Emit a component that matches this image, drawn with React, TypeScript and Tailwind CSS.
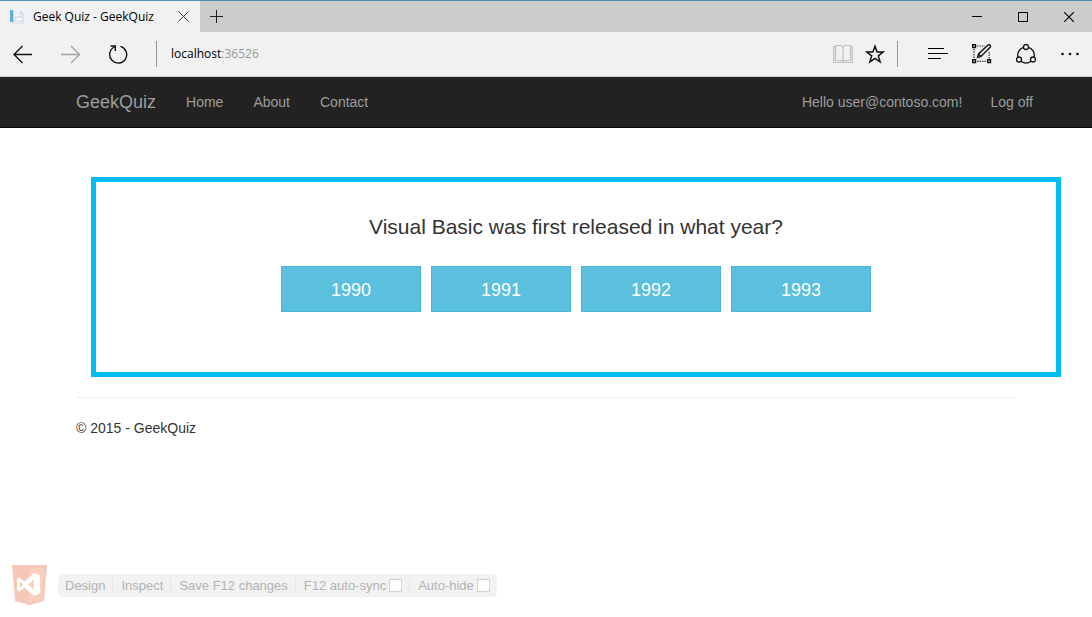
import type { ReactNode } from "react";

const answers = ["1990", "1991", "1992", "1993"];

function IconButton({ label, children, className = "w-5" }: { label: string; children: ReactNode; className?: string }) {
  return (
    <button type="button" aria-label={label} className={`${className} shrink-0`}>
      {children}
    </button>
  );
}

function TabStrip() {
  return (
    <div className="flex h-8 items-stretch border-t border-[#4a90a8] bg-[#cccccc]">
      <div className="flex w-[200px] items-center bg-[#f1f1f1] pr-[11px] pl-[9px] text-black">
        <svg className="h-4 w-4 shrink-0" viewBox="0 0 16 16" aria-hidden="true">
          <path d="M3 1h8l4 4v10H3z" fill="#dfe6eb" />
          <path d="M5 1h6v13H5z" fill="#eef2f4" />
          <path d="M11 1v4h4z" fill="#cbdde6" />
          <rect x="1" y="1" width="3" height="12" fill="#62aee0" />
          <rect x="4" y="2" width="1" height="11" fill="#c8d6df" />
          <rect x="6" y="8" width="8" height="4" fill="#f6f8f9" stroke="#cdd6dc" />
        </svg>
        <span className="ml-2 flex-1 whitespace-nowrap">Geek Quiz - GeekQuiz</span>
        <IconButton label="Close tab" className="w-[11px]">
          <svg className="h-[11px] w-[11px]" viewBox="0 0 11 11" fill="none" stroke="#333" aria-hidden="true">
            <path d="M.5.5l10 10M10.5.5l-10 10" />
          </svg>
        </IconButton>
      </div>
      <div className="flex flex-1 items-center justify-between pr-[18px] pl-[10px]">
        <IconButton label="New tab" className="w-[13px]">
          <svg className="h-[13px] w-[13px]" viewBox="0 0 13 13" stroke="#222" aria-hidden="true">
            <path d="M0 6.5h13M6.5 0v13" />
          </svg>
        </IconButton>
        <div className="flex items-center gap-9">
          <IconButton label="Minimize" className="w-[10px]">
            <svg className="h-[11px] w-[10px]" viewBox="0 0 10 11" stroke="#000" aria-hidden="true">
              <path d="M0 5.5h10" />
            </svg>
          </IconButton>
          <IconButton label="Maximize" className="w-[10px]">
            <svg className="h-[10px] w-[10px]" viewBox="0 0 10 10" fill="none" stroke="#000" aria-hidden="true">
              <path d="M.5.5h9v9h-9z" />
            </svg>
          </IconButton>
          <IconButton label="Close window" className="w-[10px]">
            <svg className="h-[10px] w-[10px]" viewBox="0 0 10 10" fill="none" stroke="#000" strokeWidth="1.1" aria-hidden="true">
              <path d="M0 0l10 10M10 0L0 10" />
            </svg>
          </IconButton>
        </div>
      </div>
    </div>
  );
}

function AddressBar() {
  return (
    <div className="flex h-[45px] items-center justify-between border-b border-[#cccccc] bg-[#f1f1f1] pr-3 pl-3">
      <div className="flex items-center gap-7">
        <IconButton label="Back">
          <svg className="h-5 w-5" viewBox="0 0 20 20" fill="none" stroke="#111" strokeWidth="1.3" aria-hidden="true">
            <path d="M20 10.5H2M10.500 2L2 10.5l8.500 8.500" />
          </svg>
        </IconButton>
        <IconButton label="Forward">
          <svg className="h-5 w-5" viewBox="0 0 20 20" fill="none" stroke="#a5a5a5" strokeWidth="1.3" aria-hidden="true">
            <path d="M1 10.5h18.500M11 2l8.500 8.500L11 19" />
          </svg>
        </IconButton>
        <IconButton label="Refresh">
          <svg className="h-5 w-5" viewBox="0 0 20 20" fill="none" stroke="#111" strokeWidth="1.4" aria-hidden="true">
            <path d="M12.500 2.400A8.500 8.500 0 1 1 6.300 3M2.500 2h4.800v5" />
          </svg>
        </IconButton>
        <div className="flex items-center gap-[14px]">
          <span className="h-[26px] w-px bg-[#949494]" />
          <span className="text-black">
            localhost<span className="text-[#999999]">:36526</span>
          </span>
        </div>
      </div>
      <div className="flex items-center gap-6">
        <div className="flex items-center gap-3 pr-[6px]">
          <IconButton label="Reading view">
            <svg className="h-5 w-5" viewBox="0 0 20 20" fill="none" stroke="#c0c0c0" strokeWidth="1.200" aria-hidden="true">
              <path d="M2.500 2.500H.7v16h18.600v-16h-1.800M2.500 16.500v-15h5.500l2 1.500 2-1.500h5.500v15h-6l-1.500 1.500-1.500-1.500zM10 3v15" />
            </svg>
          </IconButton>
          <IconButton label="Add to favorites">
            <svg className="h-5 w-5" viewBox="0 0 20 20" fill="none" stroke="#111" strokeWidth="1.500" aria-hidden="true">
              <path d="M10 2.200l2.100 5.800h6.100l-4.900 3.800 1.800 6.100L10 14.300l-5.100 3.600 1.800-6.100L1.800 8h6.100z" />
            </svg>
          </IconButton>
          <span className="h-[26px] w-px bg-[#949494]" />
        </div>
        <IconButton label="Hub">
          <svg className="h-5 w-5" viewBox="0 0 20 20" stroke="#000" aria-hidden="true">
            <path d="M0 4.500h16M0 9.500h20M0 14.500h13" strokeWidth="1.200" />
          </svg>
        </IconButton>
        <IconButton label="Make a web note">
          <svg className="h-5 w-5" viewBox="0 0 20 20" fill="none" stroke="#111" aria-hidden="true">
            <path d="M.7.7h2.800v2.800H.7zM.7 15.700h2.800v2.800H.7zM15.700 15.700h2.800v2.800h-2.800z" strokeWidth="1.400" />
            <path d="M5 2h8M2 5v10M5 17.300h10M17.200 8v7" stroke="#333" strokeWidth="1.200" strokeDasharray="1.500 1" />
            <path d="M5.500 13.500l1-3.500 9.500-9c1.500-1 3.200.7 2.200 2.200l-9.200 9.300zM6.500 10l2.500 2.500" strokeWidth="1.400" />
          </svg>
        </IconButton>
        <IconButton label="Share">
          <svg className="h-5 w-5" viewBox="0 0 20 20" fill="none" stroke="#111" strokeWidth="1.300" aria-hidden="true">
            <circle cx="10" cy="3" r="2.500" />
            <circle cx="3" cy="15.500" r="2.500" />
            <circle cx="17" cy="15.500" r="2.500" />
            <path d="M7.500 3.300A8.400 8.400 0 0 0 1.900 13M12.500 3.300A8.400 8.400 0 0 1 18.100 13M5 17.200a8.400 8.400 0 0 0 10 0" />
          </svg>
        </IconButton>
        <IconButton label="More actions">
          <svg className="h-5 w-5" viewBox="0 0 20 20" fill="#111" aria-hidden="true">
            <circle cx="2.500" cy="10" r="1.300" />
            <circle cx="10" cy="10" r="1.300" />
            <circle cx="17.500" cy="10" r="1.300" />
          </svg>
        </IconButton>
      </div>
    </div>
  );
}

function SiteNav() {
  return (
    <nav className="border-b border-[#080808] bg-[#222222] text-[#9d9d9d]">
      <div className="mx-auto flex h-[50px] max-w-[970px] items-center justify-between pl-[15px]">
        <div className="flex items-center gap-[30px]">
          <a href="#" className="text-lg leading-5">GeekQuiz</a>
          <a href="#home">Home</a>
          <a href="#about">About</a>
          <a href="#contact">Contact</a>
        </div>
        <div className="-mr-[2px] flex items-center gap-7 whitespace-nowrap">
          <a href="#account">Hello user@contoso.com!</a>
          <a href="#logoff">Log off</a>
        </div>
      </div>
    </nav>
  );
}

function DevToolbar() {
  return (
    <div className="mt-auto flex items-center gap-[11px] pb-3 pl-3 text-[13px] leading-4 text-[#b3b3b3]">
      <svg className="h-10 w-[35px] shrink-0" viewBox="0 0 35 40" aria-hidden="true">
        <path d="M0 0h35l-3 36-14.500 4L3 36z" fill="#f6c8bb" />
        <path d="M17.500 3h14.600l-2.600 31-12 3.300z" fill="#f9d0bf" />
        <path
          d="M22 8l6 2.500v18L22 31l-9.500-8.500-5 4L5 25V14l2.500-1.500 5 4zM22 14.500L16 19.500l6 5zM8 16.500v6l3-3z"
          fill="#fff"
          fillRule="evenodd"
        />
      </svg>
      <div className="flex h-[23px] items-center rounded-[5px] bg-[#f2f2f2] px-[7px] pt-px whitespace-nowrap">
        <button type="button" className="border-r border-[#e6e6e6] pr-[7px]">Design</button>
        <button type="button" className="border-r border-[#e6e6e6] pr-[7px] pl-2">Inspect</button>
        <button type="button" className="border-r border-[#e6e6e6] pr-[7px] pl-2">Save F12 changes</button>
        <label className="flex items-center gap-[3px] border-r border-[#e6e6e6] pr-[7px] pl-2">
          F12 auto-sync
          <input type="checkbox" className="h-[13px] w-[13px] appearance-none border border-[#d3d3d3] bg-white checked:bg-[#b3b3b3]" />
        </label>
        <label className="flex items-center gap-[3px] pl-2">
          Auto-hide
          <input type="checkbox" className="h-[13px] w-[13px] appearance-none border border-[#d3d3d3] bg-white checked:bg-[#b3b3b3]" />
        </label>
      </div>
    </div>
  );
}

export default function App() {
  return (
    <div className="flex min-h-screen flex-col bg-white font-['Liberation_Sans',Arial,sans-serif] text-sm leading-5 text-[#333333]">
      <header className="font-['Open_Sans','Noto_Sans',sans-serif] text-xs leading-5">
        <TabStrip />
        <AddressBar />
      </header>
      <SiteNav />
      <div className="mx-auto w-full max-w-[970px] px-[15px] pt-[49px]">
        <main className="-mr-[45px] ml-[15px] border-5 border-[#00bcf2] pt-8 pb-[60px] text-center">
          <h1 className="text-[21px] leading-[26px]">Visual Basic was first released in what year?</h1>
          <div className="mt-[26px] flex justify-center gap-[10px]">
            {answers.map((year) => (
              <button
                key={year}
                type="button"
                className="h-[46px] w-[140px] border border-[#46b8da] bg-[#5bc0de] pt-[2px] text-lg text-white"
              >
                {year}
              </button>
            ))}
          </div>
        </main>
        <hr className="my-5 border-[#eeeeee]" />
        <footer>
          <p>© 2015 - GeekQuiz</p>
        </footer>
      </div>
      <DevToolbar />
    </div>
  );
}
